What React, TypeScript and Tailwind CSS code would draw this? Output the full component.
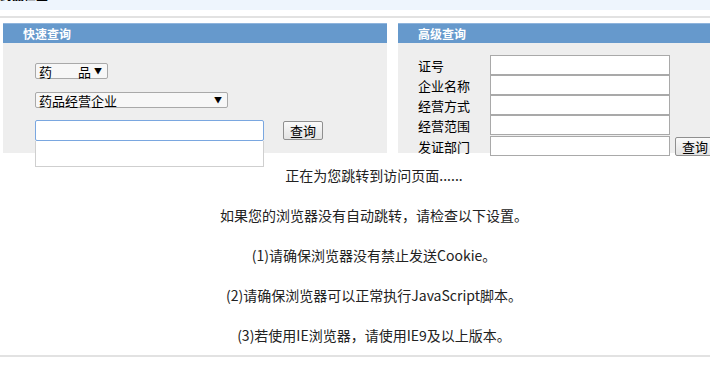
import React from "react";

const font = { fontFamily: '"Noto Sans CJK SC", "Noto Sans", sans-serif' };

function FakeSelect({ label, width }: { label: string; width: string }) {
  return (
    <div
      className={`${width} h-[16px] flex items-center justify-between border border-[#a9a9a9] rounded-[2px] bg-[#f7f7f7] pl-[3px] pr-[5px] text-[13px] leading-none text-black`}
    >
      <span>{label}</span>
      <span className="text-[8px]">▼</span>
    </div>
  );
}

function Btn() {
  return (
    <div className="w-[40px] h-[19px] flex items-center justify-center border border-[#8f8f8f] rounded-[2px] bg-gradient-to-b from-[#fafafa] to-[#e3e3e3] text-[13px] leading-none text-black">
      查询
    </div>
  );
}

export default function App() {
  const labels = ["证号", "企业名称", "经营方式", "经营范围", "发证部门"];
  const lines = [
    "正在为您跳转到访问页面......",
    "如果您的浏览器没有自动跳转，请检查以下设置。",
    "(1)请确保浏览器没有禁止发送Cookie。",
    "(2)请确保浏览器可以正常执行JavaScript脚本。",
    "(3)若使用IE浏览器，请使用IE9及以上版本。",
  ];
  return (
    <div className="w-[710px] h-[381px] overflow-hidden bg-white relative" style={font}>
      <div className="h-[10px] bg-[#eef5fd] overflow-hidden">
        <div className="-mt-[12px] text-[12px] font-bold text-black leading-[14px]">药品检查</div>
      </div>
      <div className="h-[6px]" />
      <div className="h-[2px] bg-[#e2e2e2]" />
      <div className="h-[5px]" />
      <div className="flex gap-[11px] pl-[3px] w-[780px]">
        {/* left panel */}
        <div className="w-[384px] relative">
          <div className="h-[20px] bg-[#6699cc] border-t border-[#8fb4dc] flex items-center pl-[20px] text-[12px] font-bold text-white">
            快速查询
          </div>
          <div className="h-[110px] bg-[#eeeeee] pl-[32px] pt-[20px]">
            <FakeSelect label="药　　品" width="w-[73px]" />
            <div className="h-[13px]" />
            <FakeSelect label="药品经营企业" width="w-[193px]" />
            <div className="flex items-center mt-[12px] gap-[19px]">
              <div className="w-[229px] h-[21px] border border-[#7aa7e0] rounded-[2px] bg-white" />
              <Btn />
            </div>
          </div>
          <div className="absolute left-[32px] top-[118px] w-[229px] h-[26px] bg-white border border-[#cfcfcf] border-t-0" />
        </div>
        {/* right panel */}
        <div className="w-[360px]">
          <div className="h-[20px] bg-[#6699cc] border-t border-[#8fb4dc] flex items-center pl-[20px] text-[12px] font-bold text-white">
            高级查询
          </div>
          <div className="h-[110px] bg-[#eeeeee] pl-[20px] pt-[12px]">
            <div className="flex flex-col">
              {labels.map((l, i) => (
                <div key={l} className={`flex items-center h-[20px] ${i === 4 ? "mt-[1px]" : ""}`}>
                  <div className="w-[72px] text-[13px] text-black leading-none">{l}</div>
                  <div className="w-[180px] h-[20px] border border-[#a9a9a9] bg-white" />
                  {i === 4 && (
                    <div className="ml-[5px]">
                      <Btn />
                    </div>
                  )}
                </div>
              ))}
            </div>
          </div>
        </div>
      </div>
      <div className="w-[748px] mt-[2px] flex flex-col items-center text-[14px] leading-[40px] text-[#222]">
        {lines.map((l) => (
          <div key={l}>{l}</div>
        ))}
      </div>
      <div className="h-[2px] bg-[#e2e2e2]" />
    </div>
  );
}
